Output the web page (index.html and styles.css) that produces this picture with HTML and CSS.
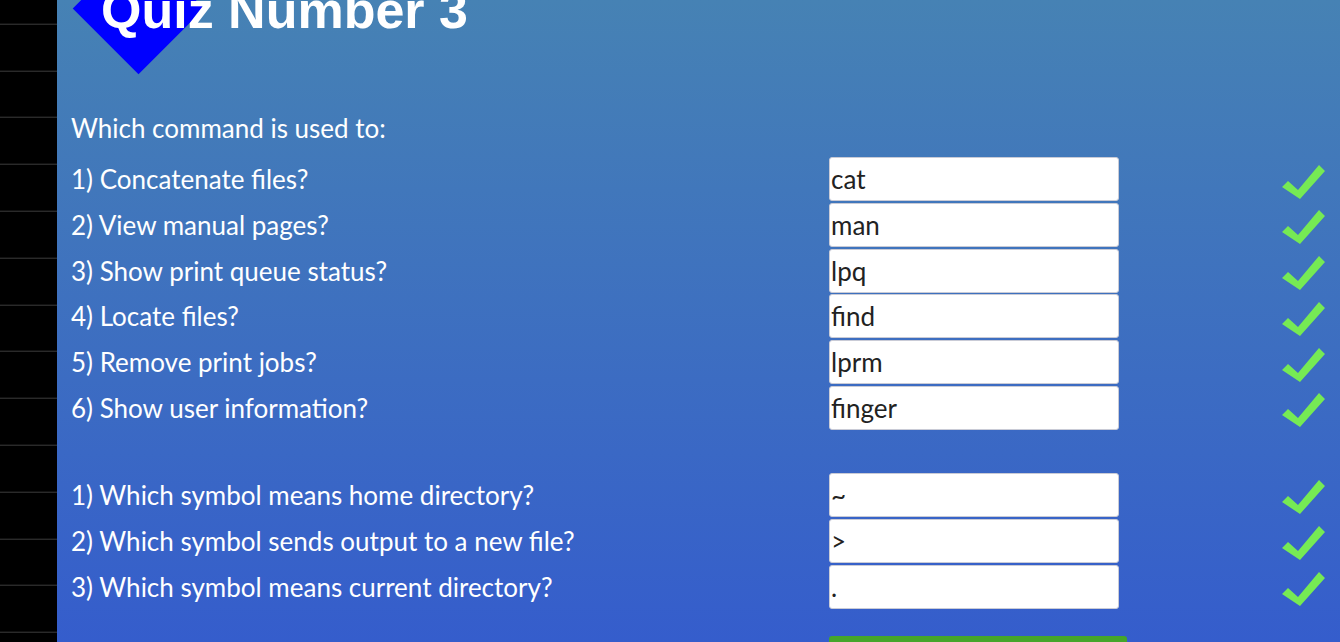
FILE: index.html
```html
<!DOCTYPE html>
<html lang="en">
<head>
<meta charset="utf-8">
<title>Quiz Number 3</title>
<link rel="stylesheet" href="styles.css">
</head>
<body>
<div class="page">
  <nav class="sidebar" aria-label="Sections"></nav>
  <main class="main">
    <header class="header">
      <h1 class="title">Quiz Number 3</h1>
    </header>
    <p class="intro">Which command is used to:</p>
    <div class="quiz">
      <label class="question" for="q1">1) Concatenate files?</label>
      <input class="answer" id="q1" type="text" value="cat">
      <span class="spacer"></span>
      <svg class="check" viewBox="0 0 44 37"><polygon points="1,24 7,18 17,27 38,2 44,8 19,36"/></svg>

      <label class="question" for="q2">2) View manual pages?</label>
      <input class="answer" id="q2" type="text" value="man">
      <span class="spacer"></span>
      <svg class="check" viewBox="0 0 44 37"><polygon points="1,24 7,18 17,27 38,2 44,8 19,36"/></svg>

      <label class="question" for="q3">3) Show print queue status?</label>
      <input class="answer" id="q3" type="text" value="lpq">
      <span class="spacer"></span>
      <svg class="check" viewBox="0 0 44 37"><polygon points="1,24 7,18 17,27 38,2 44,8 19,36"/></svg>

      <label class="question" for="q4">4) Locate files?</label>
      <input class="answer" id="q4" type="text" value="find">
      <span class="spacer"></span>
      <svg class="check" viewBox="0 0 44 37"><polygon points="1,24 7,18 17,27 38,2 44,8 19,36"/></svg>

      <label class="question" for="q5">5) Remove print jobs?</label>
      <input class="answer" id="q5" type="text" value="lprm">
      <span class="spacer"></span>
      <svg class="check" viewBox="0 0 44 37"><polygon points="1,24 7,18 17,27 38,2 44,8 19,36"/></svg>

      <label class="question" for="q6">6) Show user information?</label>
      <input class="answer" id="q6" type="text" value="finger">
      <span class="spacer"></span>
      <svg class="check" viewBox="0 0 44 37"><polygon points="1,24 7,18 17,27 38,2 44,8 19,36"/></svg>
    </div>

    <div class="quiz quiz-symbols">
      <label class="question" for="s1">1) Which symbol means home directory?</label>
      <input class="answer" id="s1" type="text" value="~">
      <span class="spacer"></span>
      <svg class="check" viewBox="0 0 44 37"><polygon points="1,24 7,18 17,27 38,2 44,8 19,36"/></svg>

      <label class="question" for="s2">2) Which symbol sends output to a new file?</label>
      <input class="answer" id="s2" type="text" value="&gt;">
      <span class="spacer"></span>
      <svg class="check" viewBox="0 0 44 37"><polygon points="1,24 7,18 17,27 38,2 44,8 19,36"/></svg>

      <label class="question" for="s3">3) Which symbol means current directory?</label>
      <input class="answer" id="s3" type="text" value=".">
      <span class="spacer"></span>
      <svg class="check" viewBox="0 0 44 37"><polygon points="1,24 7,18 17,27 38,2 44,8 19,36"/></svg>
    </div>

    <div class="actions">
      <button class="submit" type="button">Check Answers</button>
    </div>
  </main>
</div>
</body>
</html>
```

FILE: styles.css
```css
html, body {
  margin: 0;
  padding: 0;
  background: #000;
}

.page {
  display: flex;
  min-height: 100vh;
}

.sidebar {
  flex: 0 0 57px;
  background-color: #000;
  background-image: repeating-linear-gradient(
    to bottom,
    transparent 0px,
    transparent 45.8px,
    #3c3c3c 45.8px,
    #3c3c3c 46.8px
  );
  background-position: 0 -22.3px;
}

.main {
  flex: 1;
  padding: 0 0 40px 14px;
  background: linear-gradient(to bottom, #4682b4 0px, #355dcc 642px, #3358cc 100%);
  font-family: Lato, "Open Sans", sans-serif;
  color: #fff;
  overflow: hidden;
}

.header {
  position: relative;
  display: flow-root;
  height: 36px;
}

.header::before {
  content: "";
  position: absolute;
  left: 20.5px;
  top: -38.5px;
  width: 93px;
  height: 93px;
  background: #0000ff;
  transform: rotate(45deg);
}

.title {
  position: relative;
  margin: -16px 0 0 30px;
  font-family: "Liberation Sans", Arial, sans-serif;
  font-weight: bold;
  font-size: 52px;
  line-height: 52px;
  color: #fff;
}

.intro {
  margin: 70px 0 0;
  font-size: 26px;
  line-height: 44px;
  height: 44px;
}

.quiz {
  margin-top: 7px;
  display: grid;
  grid-template-columns: 758px 290px 162px 44px;
  grid-auto-rows: 44px;
  row-gap: 1.8px;
  align-items: center;
}

.quiz-symbols {
  margin-top: 43px;
}

.question {
  font-size: 26px;
  line-height: 44px;
  white-space: nowrap;
}

.answer {
  box-sizing: border-box;
  width: 290px;
  height: 44px;
  margin: 0;
  padding: 0 1px;
  border: 1px solid #c9cbd6;
  border-radius: 3px;
  background: #fff;
  font-family: Lato, "Open Sans", sans-serif;
  font-size: 26px;
  color: #222;
  outline: none;
}

.check {
  width: 44px;
  height: 37px;
  fill: #76ea54;
  margin-top: 4px;
}

.actions {
  margin-top: 27px;
  padding-left: 758px;
}

.submit {
  width: 298px;
  height: 60px;
  border: none;
  border-radius: 3px;
  background: #45a52a;
  color: #fff;
  font-family: Lato, sans-serif;
  font-size: 20px;
  padding-top: 16px;
}
```
